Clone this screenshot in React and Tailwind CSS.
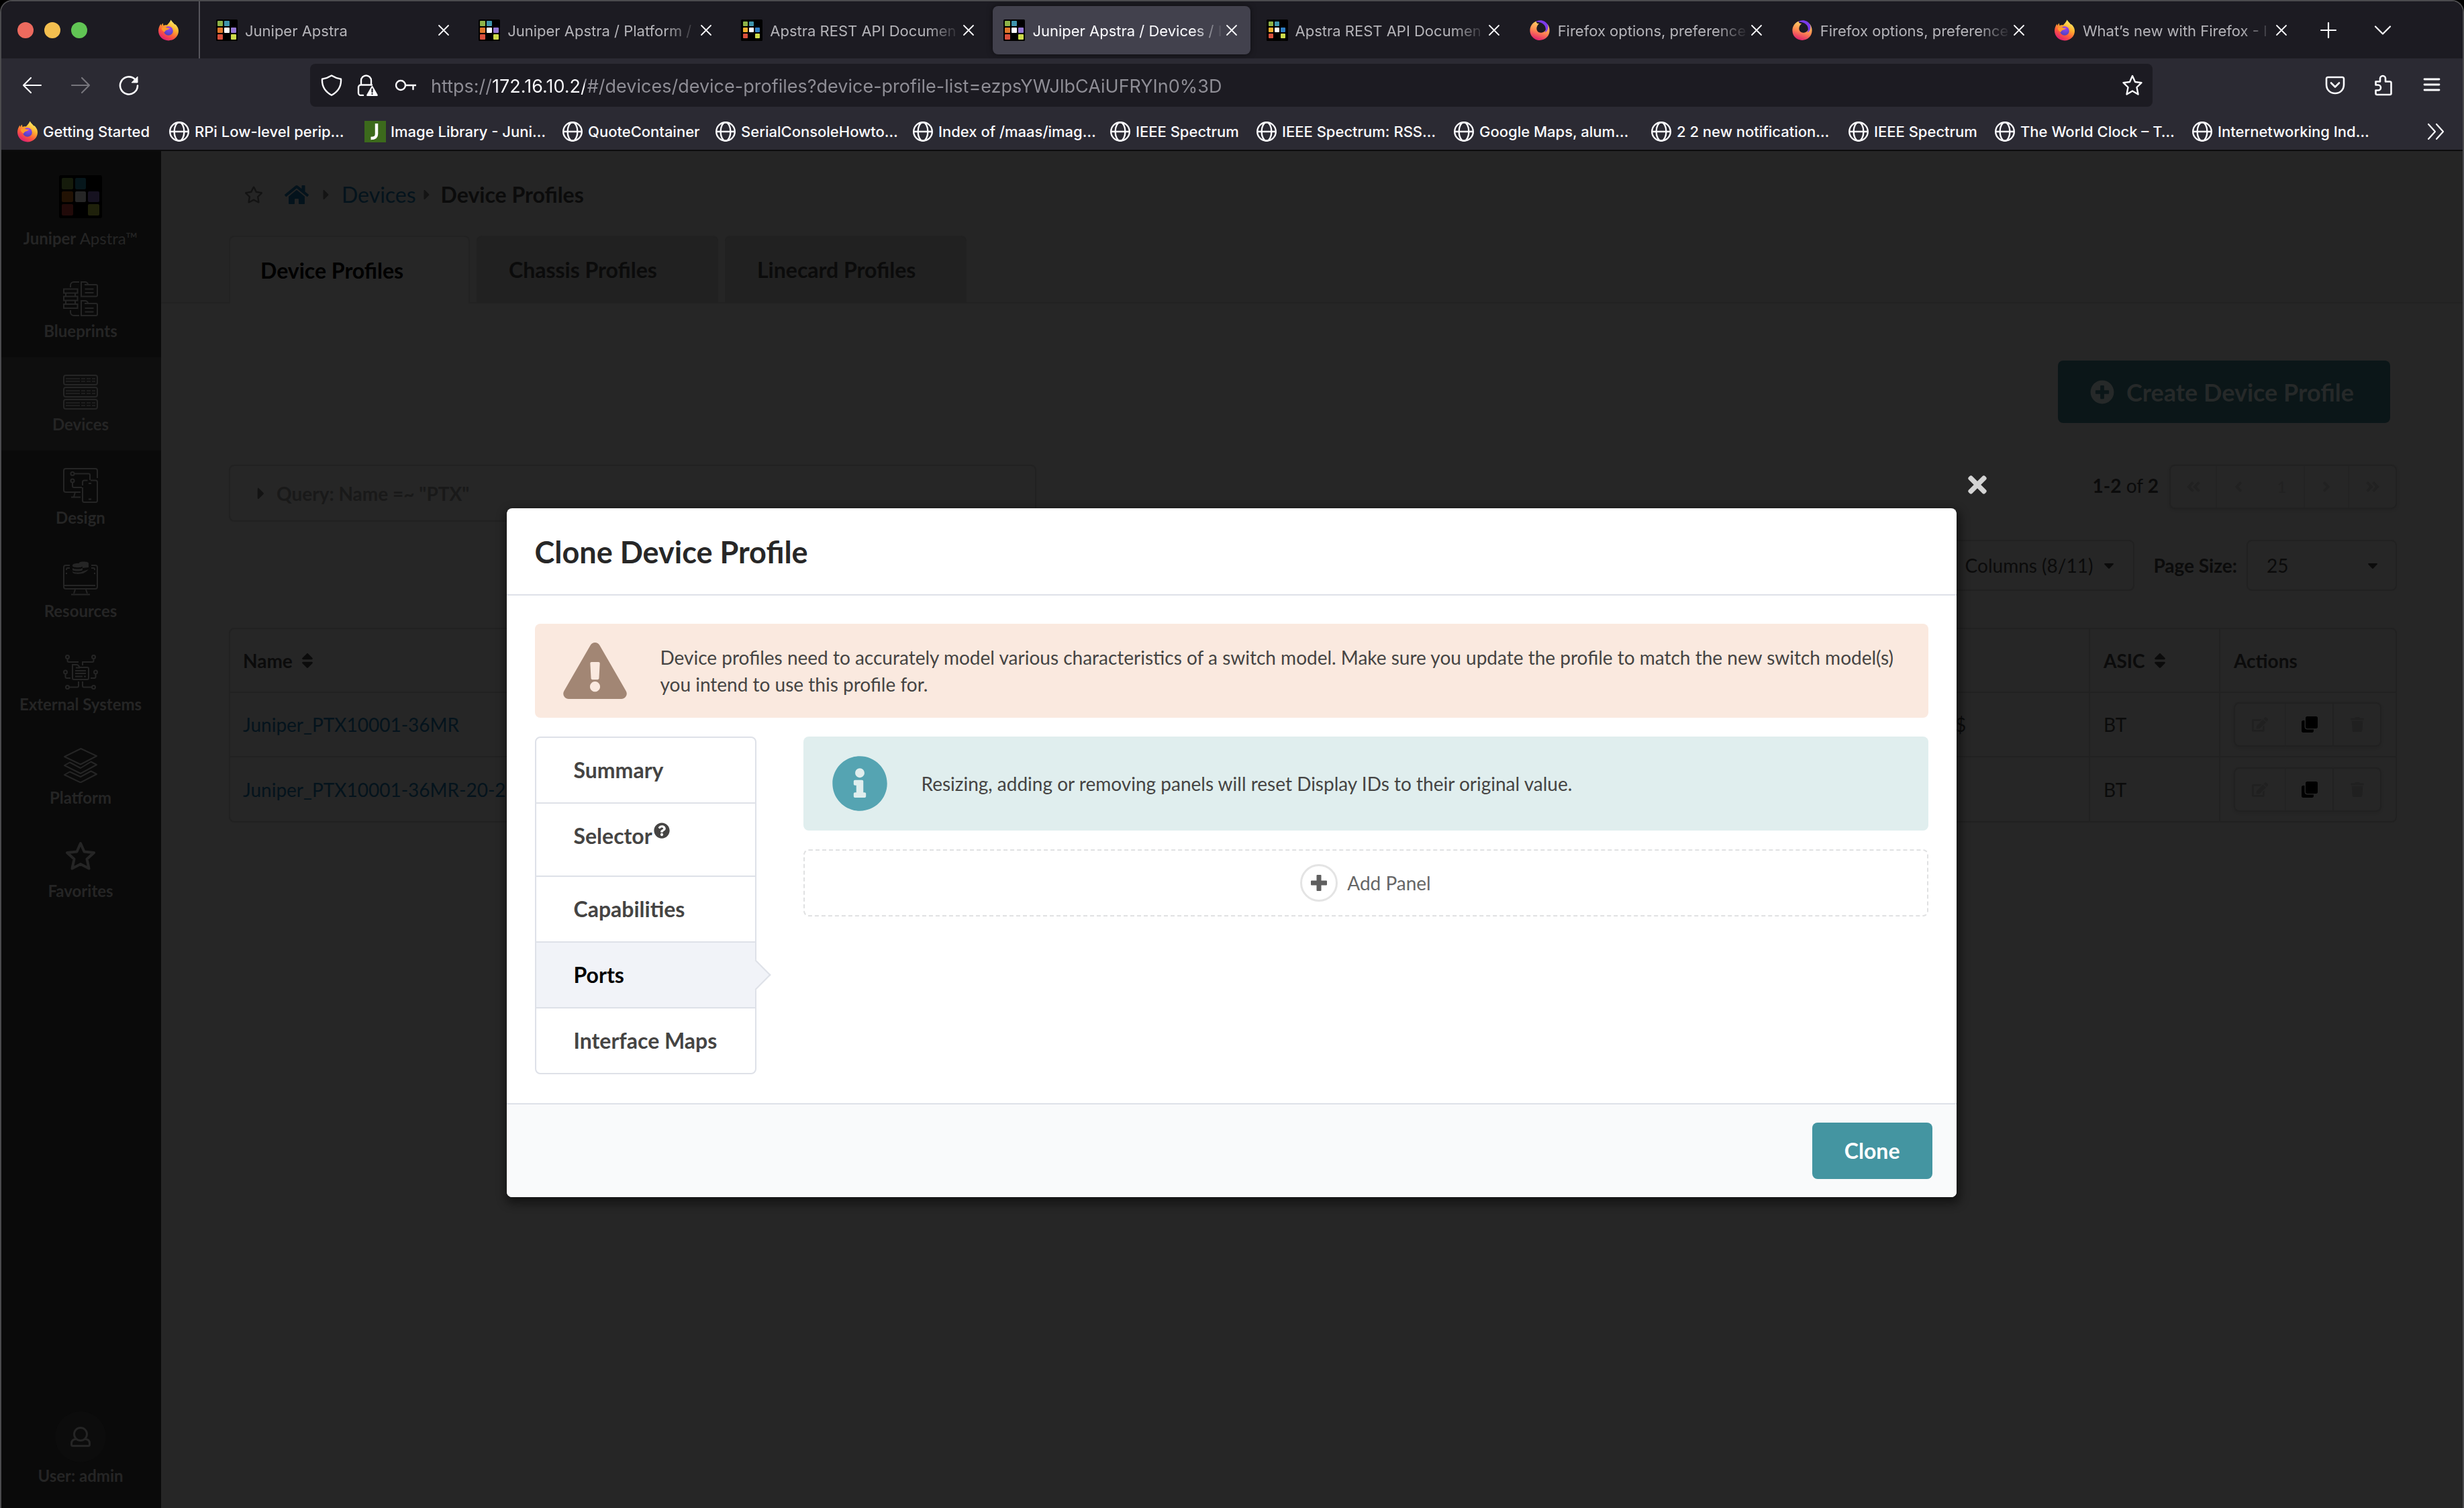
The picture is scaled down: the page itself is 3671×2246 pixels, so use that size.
import React, { useId } from "react";
import {
  FaAngleDoubleLeft,
  FaAngleDoubleRight,
  FaAngleLeft,
  FaAngleRight,
  FaCaretDown,
  FaCaretRight,
  FaClone,
  FaEdit,
  FaExclamationTriangle,
  FaHome,
  FaInfoCircle,
  FaPlusCircle,
  FaQuestionCircle,
  FaRegStar,
  FaSort,
  FaTimes,
  FaTrash,
} from "react-icons/fa";

/* ---------- browser icons ---------- */

function FirefoxIcon() {
  const id = useId();
  return (
    <svg viewBox="0 0 32 32" className="size-8 shrink-0" aria-hidden="true">
      <defs>
        <linearGradient id={`${id}a`} x1="0.8" y1="0.05" x2="0.25" y2="1">
          <stop offset="0" stopColor="#fff36e" />
          <stop offset="0.35" stopColor="#ffb02e" />
          <stop offset="0.65" stopColor="#ff5a3c" />
          <stop offset="1" stopColor="#d9187a" />
        </linearGradient>
        <radialGradient id={`${id}b`} cx="0.6" cy="0.2" r="0.9">
          <stop offset="0" stopColor="#a63df5" />
          <stop offset="0.5" stopColor="#6a46d9" />
          <stop offset="1" stopColor="#4a3fb0" />
        </radialGradient>
      </defs>
      <path
        d="M19.600.6c1.400 2.700 3.600 4.300 5.200 6.300 1.200.2 2.100.8 2.700 1.500C30 11.300 31 14 31 17.200 31 25 24.300 31.400 16 31.400S1 25 1 16.800C1 12.500 2.600 9.400 4.600 6.400l.5 3.200c.8-2 1.500-3 2.700-4.200l.6 3.700c1.600-.8 3.600-1 5.400-.6C15.800 6.600 18 4 19.600.6z"
        fill={`url(#${id}a)`}
      />
      <circle cx="16" cy="17" r="6.800" fill={`url(#${id}b)`} />
      <path
        d="M5.600 12.800c2.600-1.700 5-1.700 7.400-.8 1.800.7 3.600.9 5 .8-.4 1.600-2.600 2.300-4.600 2.900-1.600.6-2.800 1.700-3.200 3.200-2.600-1-4.300-3.300-4.600-6.100z"
        fill="#ff9a2e"
      />
    </svg>
  );
}

function FirefoxSwirlIcon() {
  const id = useId();
  return (
    <svg viewBox="0 0 32 32" className="size-8 shrink-0" aria-hidden="true">
      <defs>
        <linearGradient id={`${id}a`} x1="0.7" y1="0.1" x2="0.4" y2="1">
          <stop offset="0" stopColor="#ffd567" />
          <stop offset="0.5" stopColor="#ff8a50" />
          <stop offset="1" stopColor="#e0226e" />
        </linearGradient>
      </defs>
      <path
        d="M11 2.600C5 5 1.400 10.200 1.400 16.600 1.400 24.800 8 31 16 31s14.600-6.200 14.600-14.400c0-4-1.200-7.400-3.600-10 .6 6-2.400 12.600-8.600 13.200-5 .4-8-3.600-6.800-8.200.6-2.400 1.800-4 3.600-5.400C12.600 6.200 10.400 5.200 11 2.600z"
        fill={`url(#${id}a)`}
      />
      <path
        d="M10 3.400C15.600-.6 24 1 27.600 7.400c2.200 4.600.4 10-4.200 12.200C27 13.200 24.200 3.400 10 3.400z"
        fill="#7c3bea"
      />
    </svg>
  );
}

function ApstraIcon() {
  return (
    <svg viewBox="0 0 32 32" className="size-8 shrink-0" aria-hidden="true">
      <rect width="32" height="32" rx="1.500" fill="#000" />
      <rect x="2" y="2" width="8" height="8" rx="1" fill="#8db348" />
      <rect x="12" y="2" width="8" height="8" rx="1" fill="#3e94ab" />
      <rect x="2" y="12" width="8" height="8" rx="1" fill="#e0782b" />
      <rect x="12" y="12" width="8" height="8" rx="1" fill="#fff" />
      <rect x="22" y="12" width="8" height="8" rx="1" fill="#9478d4" />
      <rect x="2" y="22" width="8" height="8" rx="1" fill="#d9503c" />
      <rect x="22" y="22" width="8" height="8" rx="1" fill="#cddb4b" />
    </svg>
  );
}

function ApstraApiIcon() {
  return (
    <svg viewBox="0 0 32 32" className="size-8 shrink-0" aria-hidden="true">
      <rect width="32" height="32" rx="1.500" fill="#000" />
      <rect x="3" y="3" width="7" height="7" rx="1" fill="#8db348" />
      <rect x="12" y="3" width="7" height="7" rx="1" fill="#3e94ab" />
      <rect x="3" y="12" width="7" height="7" rx="1" fill="#f5b02e" />
      <rect x="12" y="12" width="7" height="7" rx="1" fill="#fff" />
      <rect x="21" y="12" width="7" height="7" rx="1" fill="#2f7fc4" />
      <rect x="3" y="21" width="7" height="7" rx="1" fill="#d9503c" />
      <rect x="21" y="21" width="7" height="7" rx="1" fill="#cddb4b" />
    </svg>
  );
}

function GlobeIcon() {
  return (
    <svg viewBox="0 0 32 32" className="size-8 shrink-0" fill="none" stroke="#fbfbfe" strokeWidth="2.400" aria-hidden="true">
      <circle cx="16" cy="16" r="13.800" />
      <ellipse cx="16" cy="16" rx="7.400" ry="13.800" />
      <path d="M2.500 16h27" />
    </svg>
  );
}

function Line({ d, size = "size-8", color = "#fbfbfe", width = 2.2, box = "0 0 32 32", children }) {
  return (
    <svg
      viewBox={box}
      className={`${size} shrink-0`}
      fill="none"
      stroke={color}
      strokeWidth={width}
      strokeLinecap="round"
      strokeLinejoin="round"
      aria-hidden="true"
    >
      {d && <path d={d} />}
      {children}
    </svg>
  );
}

/* ---------- sidebar icons ---------- */

function NavSvg({ children }) {
  return (
    <svg viewBox="0 0 52 52" className="size-[52px]" fill="none" stroke="currentColor" strokeWidth="2" aria-hidden="true">
      {children}
    </svg>
  );
}

const BlueprintsIcon = () => (
  <NavSvg>
    <path d="M11 9V6a5 5 0 0 1 5-5h8M11 43v3a5 5 0 0 0 5 5h8" />
    <path d="M1 11.500h20.500v6H1zM1 22.500h20.500v6H1zM1 34h20.500v6H1zM4 17.500v5M18 17.500v5M4 28.500V34M18 28.500V34" />
    <path d="M27 22.500V1h6c2 0 3.500 1.500 4.500 4H49a2 2 0 0 1 2 2v13.500a2 2 0 0 1-2 2zM32 5h5M32.500 11.500h13M32.500 17h13" />
    <path d="M27 51V29h6c2 0 3.500 1.500 4.500 4H49a2 2 0 0 1 2 2v14a2 2 0 0 1-2 2zM32 33h5M32.500 40h13M32.500 45.500h13" />
  </NavSvg>
);

const DevicesIcon = () => (
  <NavSvg>
    <rect x="1" y="1" width="50" height="14" rx="3" />
    <rect x="1" y="19" width="50" height="14" rx="3" />
    <rect x="1" y="37" width="50" height="14" rx="3" />
    <path
      strokeWidth="1.600"
      d="M4 6h21M4 10h21M27 6h6M27 10h6M35 6h6M35 10h6M43 6h5M43 10h5M4 24h21M4 28h21M27 24h6M27 28h6M35 24h6M35 28h6M43 24h5M43 28h5M4 42h21M4 46h21M27 42h6M27 46h6M35 42h6M35 46h6M43 42h5M43 46h5"
    />
  </NavSvg>
);

const DesignIcon = () => (
  <NavSvg>
    <path d="M51 15V4a3 3 0 0 0-3-3H4a3 3 0 0 0-3 3v29a3 3 0 0 0 3 3h22M18 36l-2 7M12 43.500h14" />
    <circle cx="14" cy="8.500" r="2.600" />
    <circle cx="14" cy="19" r="2.600" />
    <path d="M17 8.500h21q2 0 2 2V18M14 22v5q0 2 2 2h12" />
    <path d="M29 26v-5a2.500 2.500 0 0 1 2.500-2.500h5M41 18.500h7.500A2.500 2.500 0 0 1 51 21v27.500a2.500 2.500 0 0 1-2.500 2.500h-17a2.500 2.500 0 0 1-2.500-2.500V29M38 23h4M38 46.500h4" />
  </NavSvg>
);

const ResourcesIcon = () => (
  <NavSvg>
    <path d="M10 6H4a3 3 0 0 0-3 3v29a3 3 0 0 0 3 3h44a3 3 0 0 0 3-3V9a3 3 0 0 0-3-3h-6M1 36h47M18 42l-2 6M34 42l2 6M12 49.500h28M5 13v-1a2 2 0 0 1 2-2h3M42 10h3a2 2 0 0 1 2 2v1M5 17v2M47 17v2" />
    <g fill="currentColor" stroke="none">
      <path d="M24 2c2-2 14-2 14 1v6l-9 1c0-3-2-5-6-6z" />
      <path d="M14 6c0-4 15-4 15 0v1c0 3-15 3-15 0zM14 10c3 2 12 2 15 0v3c-1 2-14 2-15 0zM14 15c3 2 12 2 15 0l9-3-3 3-5 3c-4 1-15 2-16-2z" />
    </g>
  </NavSvg>
);

const ExternalIcon = () => (
  <NavSvg>
    <circle cx="6.500" cy="3.500" r="2.500" />
    <circle cx="45.500" cy="3.500" r="2.500" />
    <circle cx="3.500" cy="26" r="2.500" />
    <circle cx="48.500" cy="26" r="2.500" />
    <circle cx="6.500" cy="48.500" r="2.500" />
    <circle cx="45.500" cy="48.500" r="2.500" />
    <path d="M6.500 6v3q0 2 2 2H23M45.500 6v3q0 2-2 2H29v5M3.500 29v4q0 2 2 2H11M48.500 29v4q0 2-2 2H41M9 48.500h12q2 0 2-2V40M43 48.500H31q-2 0-2-2V40" />
    <path d="M14 15h6c2 0 3.500 1.500 4.500 4H36a2 2 0 0 1 2 2v14a2 2 0 0 1-2 2H16a2 2 0 0 1-2-2zM19 19.500h6M18 24h16M18 28h16M18 32.500h11M31 32.500h3" />
  </NavSvg>
);

const PlatformIcon = () => (
  <NavSvg>
    <path strokeLinejoin="round" d="M26.500 1 50 12 26 24.500 2 13zM10 21.500 2 26l24 12 24-13-8.500-4.500L26 30zM10 35.500 2 40l24 11.500L50 39l-8.500-4.500L26 43z" />
  </NavSvg>
);

const FavoritesIcon = () => (
  <NavSvg>
    <path strokeWidth="4" strokeLinejoin="round" d="m26 3 5.500 12.500L46 17 35.500 26.500 38.500 40.500 26 34 13.500 40.500 16.500 26.500 6 17l14.500-1.500z" />
  </NavSvg>
);

/* ---------- data ---------- */

const tabs = [
  { title: "Juniper Apstra", Icon: ApstraIcon },
  { title: "Juniper Apstra / Platform /", Icon: ApstraIcon },
  { title: "Apstra REST API Documen", Icon: ApstraApiIcon },
  { title: "Juniper Apstra / Devices / I", Icon: ApstraIcon, active: true },
  { title: "Apstra REST API Documen", Icon: ApstraApiIcon },
  { title: "Firefox options, preference", Icon: FirefoxSwirlIcon },
  { title: "Firefox options, preference", Icon: FirefoxSwirlIcon },
  { title: "What’s new with Firefox - I", Icon: FirefoxIcon },
];

const bookmarks = [
  { label: "Getting Started", width: "w-[226px]", kind: "firefox" },
  { label: "RPi Low-level perip…", width: "w-[292px]" },
  { label: "Image Library - Juni…", width: "w-[294px]", kind: "juniper" },
  { label: "QuoteContainer", width: "w-[228px]" },
  { label: "SerialConsoleHowto…", width: "w-[294px]" },
  { label: "Index of /maas/imag…", width: "w-[294px]" },
  { label: "IEEE Spectrum", width: "w-[218px]" },
  { label: "IEEE Spectrum: RSS…", width: "w-[294px]" },
  { label: "Google Maps, alum…", width: "w-[294px]" },
  { label: "2 2 new notification…", width: "w-[294px]" },
  { label: "IEEE Spectrum", width: "w-[218px]" },
  { label: "The World Clock – T…", width: "w-[294px]" },
  { label: "Internetworking Ind…", width: "w-[294px]" },
];

const navItems = [
  { label: "Blueprints", Icon: BlueprintsIcon },
  { label: "Devices", Icon: DevicesIcon, active: true },
  { label: "Design", Icon: DesignIcon },
  { label: "Resources", Icon: ResourcesIcon },
  { label: "External Systems", Icon: ExternalIcon },
  { label: "Platform", Icon: PlatformIcon },
  { label: "Favorites", Icon: FavoritesIcon },
];

const rows = [
  { name: "Juniper_PTX10001-36MR", model: "$", asic: "BT" },
  { name: "Juniper_PTX10001-36MR-20-2", model: "", asic: "BT" },
];

const steps = ["Summary", "Selector", "Capabilities", "Ports", "Interface Maps"];

/* ---------- browser chrome ---------- */

function TabStrip() {
  return (
    <div className="flex h-[85px] items-stretch bg-[#1c1b22]">
      <div className="mr-1 flex w-[296px] shrink-0 items-center border-r-2 border-[#56555c]">
        <div className="ml-6 flex gap-4">
          <button aria-label="Close window" className="size-6 rounded-full bg-[#ec6a5e]" />
          <button aria-label="Minimize window" className="size-6 rounded-full bg-[#f4bf4f]" />
          <button aria-label="Zoom window" className="size-6 rounded-full bg-[#61c554]" />
        </div>
        <button aria-label="Firefox View" className="ml-[105px]">
          <FirefoxIcon />
        </button>
      </div>
      <div className="flex min-w-0 flex-1">
        {tabs.map(({ title, Icon, active }, i) => (
          <div
            key={i}
            className={`mx-1 my-auto flex h-[72px] min-w-0 flex-1 items-center rounded-lg pl-4 pr-4 ${
              active ? "bg-[#42414d] shadow-[0_0_8px_rgba(0,0,0,0.5)]" : ""
            }`}
          >
            <Icon />
            <a
              href="#tab"
              className={`ml-[11px] min-w-0 flex-1 overflow-hidden whitespace-nowrap pt-0.5 text-[22px] leading-8 [mask-image:linear-gradient(to_left,transparent,black_48px)] ${
                active ? "text-[#fbfbfe]" : "text-[#b5b4b9]"
              }`}
            >
              {title}
            </a>
            <button aria-label={`Close ${title}`} className="flex w-6 shrink-0 justify-center">
              <Line size="size-5" box="0 0 20 20" width={1.8} d="M3 3l14 14M17 3L3 17" />
            </button>
          </div>
        ))}
      </div>
      <div className="flex w-[238px] shrink-0 items-center gap-[53px] pl-6">
        <button aria-label="New tab">
          <Line size="size-7" box="0 0 28 28" d="M14 3v22M3 14h22" />
        </button>
        <button aria-label="List all tabs">
          <Line size="size-7" box="0 0 28 28" d="M3 8.500l11 11 11-11" />
        </button>
      </div>
    </div>
  );
}

function Toolbar() {
  return (
    <div className="flex h-20 items-center bg-[#2b2a33]">
      <div className="flex w-[460px] shrink-0 items-center gap-10 pl-[30px]">
        <button aria-label="Back">
          <Line d="M29 16H3M14 5L3 16l11 11" />
        </button>
        <button aria-label="Forward">
          <Line color="#76757c" d="M3 16h26M18 5l11 11-11 11" />
        </button>
        <button aria-label="Reload">
          <Line width={2.6}>
            <path d="M29 16.500A13 13 0 1 1 25 7" />
            <path d="M29 3.500v8.500h-8.500z" fill="#fbfbfe" strokeWidth="1" />
          </Line>
        </button>
      </div>
      <div className="flex h-16 min-w-0 flex-1 items-center rounded-lg bg-[#1c1b22] pl-4 pr-[14px]">
        <button aria-label="Tracking protection">
          <Line width={2.4} d="M16 1.500c4 2.600 8.500 4.300 14 5.200.6 9.300-3.600 18.300-14 24C5.600 25 1.400 16 2 6.700c5.500-.9 10-2.600 14-5.200z" />
        </button>
        <button aria-label="Connection is not secure" className="ml-[22px]">
          <Line width={2.4}>
            <path d="M9 31H5.500A3.500 3.500 0 0 1 2 27.500V19a3.500 3.500 0 0 1 3.500-3.500H22M6 15V9a7.500 7.500 0 0 1 15 0v6" />
            <path d="M22.500 17c.6 0 1 .3 1.300.9l6.800 12c.6 1-.1 2.100-1.200 2.100H15.600c-1.100 0-1.800-1.100-1.200-2.100l6.800-12c.3-.6.700-.9 1.300-.9z" fill="#fbfbfe" stroke="none" />
            <path d="M22.500 21.500v4.500M22.500 28.800v.2" stroke="#1c1b22" strokeWidth="2.200" />
          </Line>
        </button>
        <button aria-label="Saved logins" className="ml-6">
          <Line width={2.4}>
            <circle cx="9" cy="16" r="7" />
            <path d="M16 16h15.500M27.500 16v6" />
          </Line>
        </button>
        <input
          aria-label="Address"
          type="text"
          readOnly
          value="https://172.16.10.2/#/devices/device-profiles?device-profile-list=ezpsYWJlbCAiUFRYIn0%3D"
          className="ml-[22px] h-16 min-w-0 flex-1 bg-transparent bg-[linear-gradient(90deg,#8f8e96_92px,#fbfbfe_92px,#fbfbfe_229px,#8f8e96_229px)] bg-clip-text pt-0.5 text-[27px] text-transparent outline-none"
        />
        <button aria-label="Bookmark this page">
          <Line width={2.4} d="m16 2 4 9 9.500 1.200L22.500 19l2 10.500L16 24.500 7.500 29.500l2-10.500-7-6.800L12 11z" />
        </button>
      </div>
      <div className="flex w-[462px] shrink-0 items-center justify-end gap-10 pr-[30px]">
        <button aria-label="Save to Pocket">
          <Line width={2.6} d="M5.500 4h21A2.500 2.500 0 0 1 29 6.500V15c0 7.500-5.500 13-13 13S3 22.500 3 15V6.500A2.500 2.500 0 0 1 5.500 4zM10 12.500l6 6 6-6" />
        </button>
        <button aria-label="Extensions">
          <Line width={2.6} d="M4.500 10.500h6.500V6a4 4 0 0 1 8 0v4.500h6.500a2 2 0 0 1 2 2V28a2 2 0 0 1-2 2H6.500a2 2 0 0 1-2-2v-4.500H8a4 4 0 0 0 0-8H4.500z" />
        </button>
        <button aria-label="Open application menu">
          <Line width={2.8} d="M5 7h22M5 15h22M5 23h22" />
        </button>
      </div>
    </div>
  );
}

function BookmarkIcon({ kind }) {
  if (kind === "firefox") return <FirefoxIcon />;
  if (kind === "juniper")
    return (
      <svg viewBox="0 0 32 32" className="size-8 shrink-0" aria-hidden="true">
        <rect width="32" height="32" fill="#3c6a1c" />
        <path d="M18 4v15.500c0 4.500-2.500 6.500-8.500 6.500" fill="none" stroke="#fff" strokeWidth="4.500" />
      </svg>
    );
  return <GlobeIcon />;
}

function Bookmarks() {
  return (
    <nav aria-label="Bookmarks" className="flex h-14 items-center overflow-hidden bg-[#2b2a33] pl-[23px] pt-0.5">
      {bookmarks.map(({ label, width, kind }, i) => (
        <a key={i} href="#bookmark" className={`${width} flex shrink-0 items-center gap-[7px] whitespace-nowrap text-[22px] font-medium leading-8 text-[#fbfbfe]`}>
          <BookmarkIcon kind={kind} />
          {label}
        </a>
      ))}
      <button aria-label="More bookmarks" className="ml-auto mr-6">
        <Line d="M5 5l10 11L5 27M17 5l10 11-10 11" />
      </button>
    </nav>
  );
}

/* ---------- application ---------- */

function Sidebar() {
  return (
    <aside className="flex w-[238px] shrink-0 flex-col items-stretch bg-[#0a0a0a] text-2xl font-bold text-[#252525]">
      <a href="#home" className="flex h-[168px] flex-col items-center pr-0.5 pt-9">
        <svg viewBox="0 0 64 64" className="size-16" aria-hidden="true">
          <rect width="64" height="64" rx="3" fill="#000" />
          <rect x="4" y="4" width="17" height="17" rx="2" fill="#151b0b" />
          <rect x="24" y="4" width="16" height="17" rx="2" fill="#06161b" />
          <rect x="4" y="24" width="17" height="16" rx="2" fill="#221204" />
          <rect x="24" y="24" width="16" height="16" rx="2" fill="#262626" />
          <rect x="43" y="24" width="17" height="16" rx="2" fill="#161220" />
          <rect x="4" y="43" width="17" height="17" rx="2" fill="#210a09" />
          <rect x="43" y="43" width="17" height="17" rx="2" fill="#1f210b" />
        </svg>
        <span className="mt-[14px] leading-8">
          Juniper <span className="font-normal">Apstra™</span>
        </span>
      </a>
      <nav aria-label="Main">
        {navItems.map(({ label, Icon, active }) => (
          <a key={label} href={`#${label}`} className={`flex h-[139px] flex-col items-center pr-0.5 pt-[26px] ${active ? "bg-[#0e0e0e]" : ""}`}>
            <Icon />
            <span className="mt-1.5 leading-8">{label}</span>
          </a>
        ))}
      </nav>
      <button className="mb-8 mt-auto flex flex-col items-center pr-0.5">
        <span className="flex size-[76px] items-center justify-center rounded-full bg-[#0c0c0c]">
          <svg viewBox="0 0 30 30" className="size-[30px]" fill="none" stroke="currentColor" strokeWidth="3" aria-hidden="true">
            <circle cx="15" cy="11" r="9.500" />
            <path d="M8.500 18.500C4 18.500 1.500 21 1.500 25v1.500a2 2 0 0 0 2 2h23a2 2 0 0 0 2-2V25c0-4-2.500-6.500-7-6.500" />
          </svg>
        </span>
        <span className="mt-1 leading-8">User: admin</span>
      </button>
    </aside>
  );
}

function ActionGroup() {
  return (
    <div className="flex h-[66px] w-[220px] rounded-lg border-2 border-[#212121] shadow-[0_2px_4px_rgba(0,0,0,0.08)]">
      <button aria-label="Edit" className="flex w-[76px] items-center justify-center border-r-2 border-[#232323] text-[#202020]">
        <FaEdit className="size-6" />
      </button>
      <button aria-label="Clone" className="flex flex-1 items-center justify-center border-r-2 border-[#212121] text-black">
        <FaClone className="size-6" />
      </button>
      <button aria-label="Delete" className="flex flex-1 items-center justify-center text-[#202020]">
        <FaTrash className="size-[22px]" />
      </button>
    </div>
  );
}

function ProfilePage() {
  return (
    <main className="flex min-w-0 flex-1 flex-col bg-[#262626] text-[28px] text-[#0b0b0b]">
      <header className="bg-[#252525]">
        <nav aria-label="Breadcrumb" className="flex h-[126px] items-center pl-[124px] pt-1 text-[32px]">
          <button aria-label="Add to favorites" className="text-[#131313]">
            <FaRegStar className="size-7" />
          </button>
          <a href="#home" aria-label="Home" className="ml-8 text-[#04131c]">
            <FaHome className="size-9" />
          </a>
          <FaCaretRight className="ml-[14px] size-6 text-[#141414]" />
          <a href="#devices" className="ml-[11px] text-[#04131c]">Devices</a>
          <FaCaretRight className="ml-1 size-6 text-[#141414]" />
          <span className="ml-[9px] font-bold">Device Profiles</span>
        </nav>
        <div role="tablist" className="flex text-[32px] font-bold">
          <div className="w-[101px] border-b-2 border-[#222222]" />
          <button role="tab" aria-selected="true" className="h-[101px] w-[359px] rounded-t-lg border-x-2 border-t-2 border-[#222222] bg-[#262626] pl-[45px] text-left text-black">
            Device Profiles
          </button>
          <div className="w-2.5 border-b-2 border-[#222222]" />
          <button role="tab" aria-selected="false" className="h-[101px] w-[360px] rounded-t-lg border-y-2 border-[#212121] bg-[#212121] pl-12 text-left">
            Chassis Profiles
          </button>
          <div className="w-2.5 border-b-2 border-[#222222]" />
          <button role="tab" aria-selected="false" className="h-[101px] w-[360px] rounded-t-lg border-y-2 border-[#212121] bg-[#212121] pl-12 text-left">
            Linecard Profiles
          </button>
          <div className="flex-1 border-b-2 border-[#222222]" />
        </div>
      </header>

      <section className="pb-20 pl-[101px] pr-[98px]">
        <div className="mt-[85px] flex justify-end pr-2.5">
          <button className="flex h-[93px] items-center gap-[18px] rounded-lg bg-[#0b1618] pl-12 pr-[54px] text-4xl font-bold text-[#262929]">
            <FaPlusCircle className="size-9" />
            Create Device Profile
          </button>
        </div>

        <div className="mt-[62px] flex items-start">
          <button aria-expanded="false" className="flex h-[85px] w-[1203px] items-center rounded-lg border-2 border-[#212121] pl-8 font-bold text-[#191919]">
            <FaCaretRight className="size-7 text-[#131313]" />
            <span className="ml-[9px]">Query: Name =~ "PTX"</span>
          </button>
          <div className="ml-auto flex items-center">
            <p className="mr-4 pb-1">
              <b>1-2</b> of <b>2</b>
            </p>
            <div className="flex h-[66px] rounded-lg border-2 border-[#212121] text-[#212121] shadow-[0_2px_4px_rgba(0,0,0,0.08)]">
              <button aria-label="First page" className="flex w-[69px] items-center justify-center border-r-2 border-[#232323]"><FaAngleDoubleLeft className="size-6" /></button>
              <button aria-label="Previous page" className="flex w-16 items-center justify-center"><FaAngleLeft className="size-6" /></button>
              <button className="flex w-[67px] items-center justify-center border-r-2 border-[#232323] text-2xl">1</button>
              <button aria-label="Next page" className="flex w-[66px] items-center justify-center border-r-2 border-[#232323]"><FaAngleRight className="size-6" /></button>
              <button aria-label="Last page" className="flex w-[69px] items-center justify-center"><FaAngleDoubleRight className="size-6" /></button>
            </div>
          </div>
        </div>

        <div className="mt-[27px] flex items-center justify-end">
          <button className="flex h-[76px] items-center rounded-lg border-2 border-[#212121] px-6">
            Columns (8/11)
            <FaCaretDown className="ml-3 size-6" />
          </button>
          <label htmlFor="page-size" className="ml-7 font-bold">
            Page Size:
          </label>
          <div className="ml-3.5 grid w-[224px] items-center">
            <select id="page-size" defaultValue="25" className="col-start-1 row-start-1 h-[76px] appearance-none rounded-lg border-2 border-[#212121] bg-transparent px-7 outline-none">
              <option value="25">25</option>
              <option value="50">50</option>
              <option value="100">100</option>
            </select>
            <FaCaretDown className="pointer-events-none col-start-1 row-start-1 mr-6 size-6 justify-self-end" />
          </div>
        </div>

        <table className="mt-[55px] w-full table-fixed border-separate border-spacing-0 rounded-lg border-2 border-[#212121] text-left">
          <thead>
            <tr className="h-[95px]">
              <th scope="col" className="border-b-2 border-[#212121] pl-[19px]">
                <span className="flex items-center gap-2">
                  Name <FaSort className="size-7" />
                </span>
              </th>
              <th scope="col" aria-label="Model" className="w-[207px] border-b-2 border-r-2 border-[#212121]" />
              <th scope="col" className="w-[194px] border-b-2 border-r-2 border-[#212121] pl-5">
                <span className="flex items-center gap-2">
                  ASIC <FaSort className="size-7" />
                </span>
              </th>
              <th scope="col" className="w-[261px] border-b-2 border-[#212121] pl-5">Actions</th>
            </tr>
          </thead>
          <tbody>
            {rows.map((r, i) => (
              <tr key={r.name} className={i === 0 ? "h-24 *:border-b-2" : "h-[95px]"}>
                <td className="border-[#212121] pl-[19px]">
                  <a href={`#${r.name}`} className="text-[#04131c]">{r.name}</a>
                </td>
                <td className="border-r-2 border-[#212121] pl-[6px]">{r.model}</td>
                <td className="border-r-2 border-[#212121] pl-5">{r.asic}</td>
                <td className="border-[#212121] pl-5">
                  <ActionGroup />
                </td>
              </tr>
            ))}
          </tbody>
        </table>
      </section>
    </main>
  );
}

function CloneDialog() {
  return (
    <div className="absolute inset-0 flex items-start justify-center pl-8 pr-[34px] pt-[755px]">
      <div role="dialog" aria-modal="true" aria-labelledby="dialog-title" className="relative w-full max-w-[2160px] rounded-lg bg-white shadow-[2px_6px_14px_4px_rgba(0,0,0,0.45)]">
        <button aria-label="Close dialog" className="absolute -top-[55px] left-full ml-[11px] text-[#d4d4d4]">
          <FaTimes className="size-10" />
        </button>
        <header className="flex h-[130px] items-center border-b-2 border-[#dee1e8] px-[42px] pt-1">
          <h2 id="dialog-title" className="text-[45px] font-bold text-[#272727]">Clone Device Profile</h2>
        </header>
        <div className="px-[42px] pb-[43px] pt-[42px] text-[28px] leading-10 text-[#454443]">
          <div role="alert" className="flex h-[140px] items-center gap-[50px] rounded-lg bg-[#fae9df] px-[42px]">
            <FaExclamationTriangle className="h-[84px] w-[95px] shrink-0 text-[#a28674]" />
            <p>
              Device profiles need to accurately model various characteristics of a switch model. Make sure you update the profile to match the new switch model(s) you intend to use this profile for.
            </p>
          </div>
          <div className="mt-7 flex items-start gap-[70px]">
            <div role="tablist" aria-orientation="vertical" className="w-[330px] shrink-0 rounded-lg border-2 border-[#dee1e8] text-[32px] font-bold">
              {steps.map((s) => {
                const active = s === "Ports";
                return (
                  <button
                    key={s}
                    role="tab"
                    aria-selected={active}
                    className={`relative flex w-full border-b-2 border-[#dee1e8] pl-14 pt-7 text-left last:h-24 last:border-b-0 ${s === "Selector" ? "h-[109px]" : "h-[98px]"} ${
                      active ? "bg-[#f1f3f8] text-black" : ""
                    }`}
                  >
                    {s}
                    {s === "Selector" && <FaQuestionCircle className="ml-0.5 size-6" />}
                    {active && (
                      <span className="absolute -right-[17px] top-8 size-8 rotate-45 border-r-2 border-t-2 border-[#dee1e8] bg-[#f1f3f8]" />
                    )}
                  </button>
                );
              })}
            </div>
            <div className="min-w-0 flex-1">
              <div role="status" className="flex h-[140px] items-center gap-[50px] rounded-lg bg-[#e0eeee] px-[42px]">
                <FaInfoCircle className="size-[84px] shrink-0 text-[#55a4b2]" />
                <p>Resizing, adding or removing panels will reset Display IDs to their original value.</p>
              </div>
              <button className="mt-7 flex h-[100px] w-full items-center justify-center gap-3.5 rounded-lg border-2 border-dashed border-[#e0e1e2] text-[#666666]">
                <span className="flex size-14 items-center justify-center rounded-full border-[3px] border-[#e4e4e4]">
                  <svg viewBox="0 0 24 24" className="size-6" aria-hidden="true">
                    <path
                      d="M9.500 0h5a1 1 0 0 1 1 1v7.500H23a1 1 0 0 1 1 1v5a1 1 0 0 1-1 1h-7.500V23a1 1 0 0 1-1 1h-5a1 1 0 0 1-1-1v-7.500H1a1 1 0 0 1-1-1v-5a1 1 0 0 1 1-1h7.500V1a1 1 0 0 1 1-1z"
                      fill="#5f5f5f"
                    />
                  </svg>
                </span>
                Add Panel
              </button>
            </div>
          </div>
        </div>
        <footer className="flex h-[140px] items-center justify-end rounded-b-lg border-t-2 border-[#dee1e8] bg-[#f9fafb] pr-9">
          <button className="h-[84px] rounded-lg bg-[#4495a1] px-12 text-[32px] font-bold text-white">Clone</button>
        </footer>
      </div>
    </div>
  );
}

export default function App() {
  return (
    <div className="min-h-screen bg-black">
      <div className="relative flex min-h-screen flex-col overflow-hidden rounded-t-[18px] border-x-2 border-t-2 border-[#4b4b4e] bg-[#0c0c0d] font-[Inter,sans-serif]">
        <TabStrip />
        <Toolbar />
        <Bookmarks />
        <div className="mt-0.5 flex flex-1 font-[Lato,sans-serif]">
          <Sidebar />
          <ProfilePage />
        </div>
        <div className="font-[Lato,sans-serif]">
          <CloneDialog />
        </div>
      </div>
    </div>
  );
}
